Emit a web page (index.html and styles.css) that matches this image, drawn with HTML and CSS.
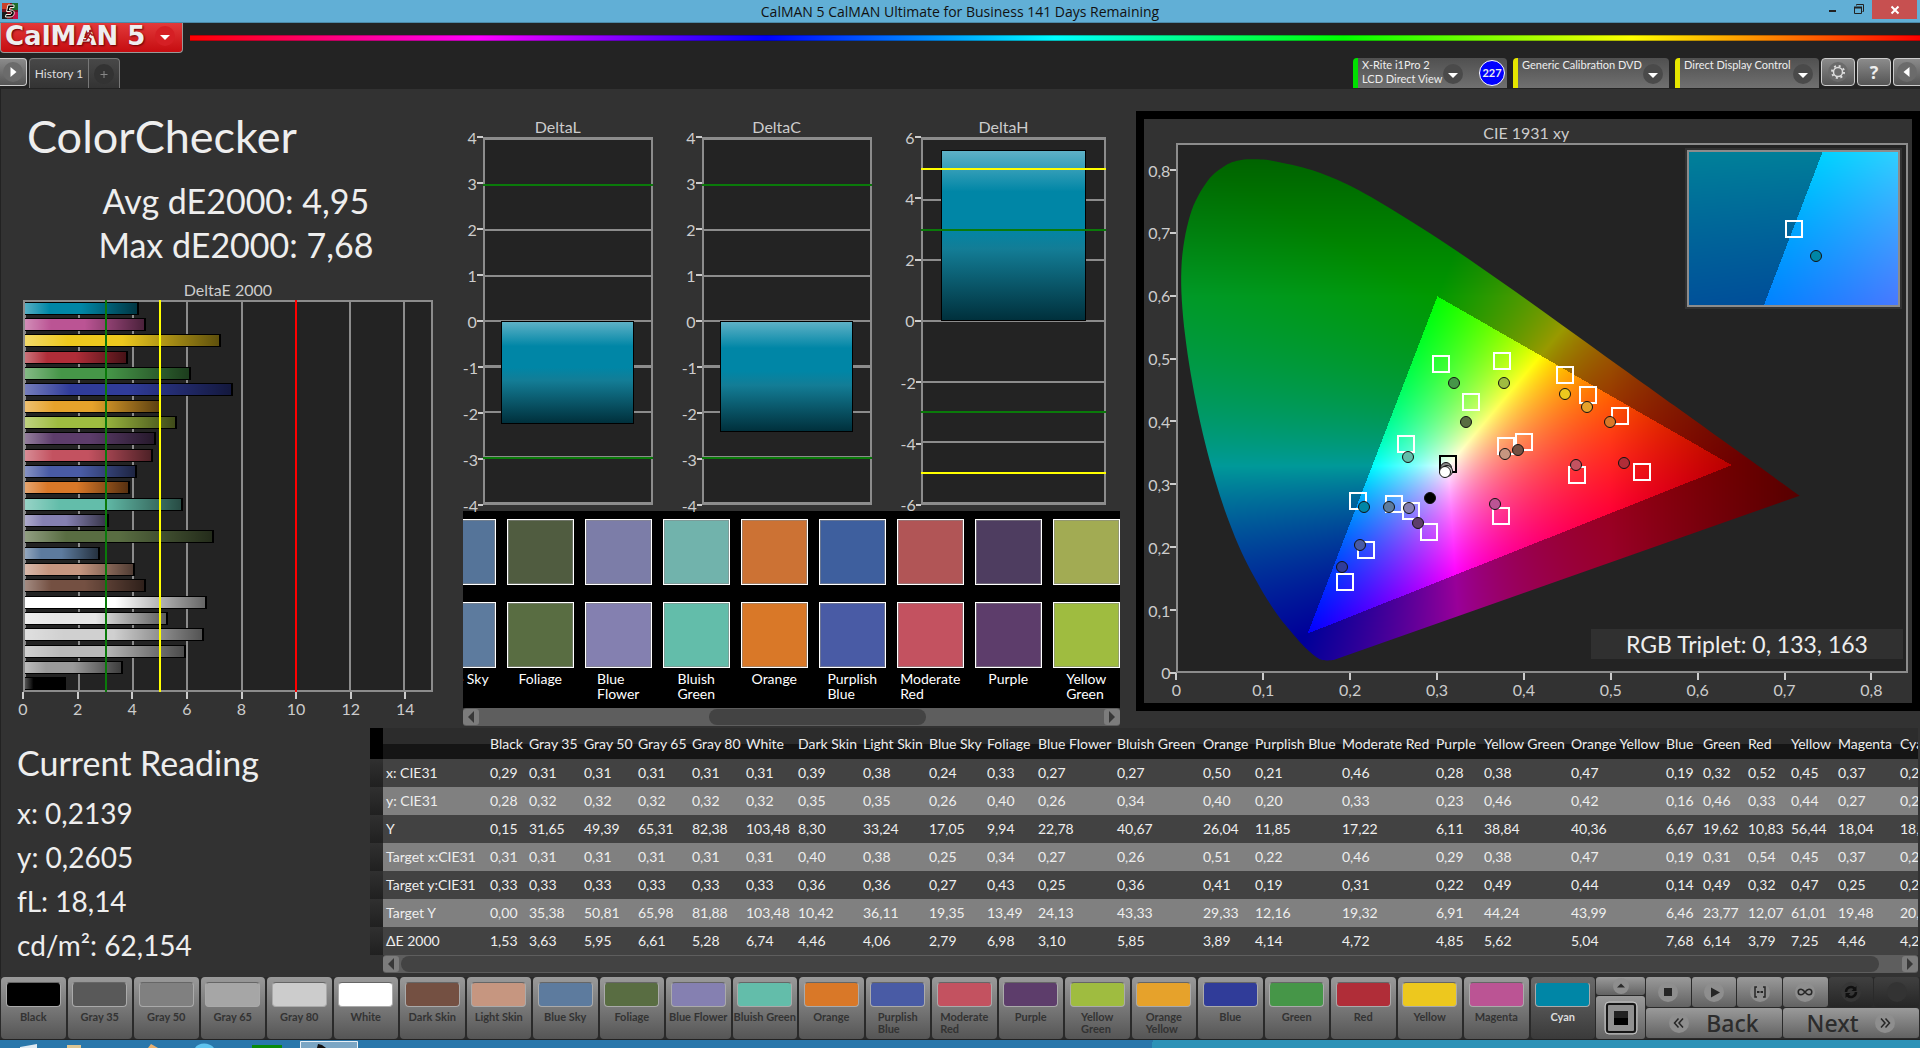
FILE: index.html
```html
<!DOCTYPE html>
<html lang="en">
<head>
<meta charset="utf-8">
<title>CalMAN 5 CalMAN Ultimate for Business 141 Days Remaining</title>
<link rel="stylesheet" href="styles.css">
</head>
<body>
<header class="titlebar">
  <svg class="app-icon" viewBox="0 0 16 16" aria-hidden="true"><rect width="16" height="16" fill="#7a1420"/><rect width="8" height="6" fill="#c8402a"/><rect x="10" width="6" height="7" fill="#1d6b2c"/><rect y="9" width="5" height="7" fill="#1a1a1a"/><rect x="11" y="9" width="5" height="7" fill="#c01048"/><path d="M12 2H6L4.500 8.500h4c2 0 1.500 3-.5 3H4L3.500 14H8c5 0 6-7 1-7H7.500L8 4.500h4z" fill="#000" stroke="#f2efe4" stroke-width="1"/></svg>
  <span class="window-title">CalMAN 5 CalMAN Ultimate for Business 141 Days Remaining</span>
  <div class="window-buttons">
    <button aria-label="Minimize"><svg viewBox="0 0 12 12"><path d="M2 7h7v2H2z" fill="#222"/></svg></button>
    <button aria-label="Restore"><svg viewBox="0 0 12 12" fill="none" stroke="#222"><path d="M1.500 4.500h7v6h-7zM3.500 2.500v-1h7v7h-1"/><path d="M1 4.500h8" stroke-width="2"/></svg></button>
    <button class="close" aria-label="Close"><svg viewBox="0 0 12 12"><path d="M2.500 2.500l7 7m0-7l-7 7" stroke="#fff" stroke-width="2"/></svg></button>
  </div>
</header>

<div class="toolbar">
  <div class="brand-row">
    <button class="brand"><span>CalMAN 5</span>
      <svg viewBox="0 0 20 20" aria-hidden="true"><circle cx="10" cy="10" r="10" fill="#d51f24"/><path d="M5 9h10l-5 5z" fill="#fff"/></svg>
      <svg class="runner" viewBox="0 0 12 14" aria-hidden="true"><circle cx="7.500" cy="2" r="1.600" fill="#a3151a"/><path d="M7 4L5 8l3 2-1 3M5 8L3 11H0M2 6l3-2h2l2 2h2" fill="none" stroke="#a3151a" stroke-width="1.500"/></svg>
    </button>
    <div class="spectrum"></div>
  </div>
  <div class="tab-row">
    <button class="square left-edge" aria-label="Expand left panel"><svg viewBox="0 0 20 20"><circle class="knob" cx="10" cy="10" r="10"/><path d="M7.500 5l6 5-6 5z" fill="#fff"/></svg></button>
    <nav class="tabs"><a href="#history" class="tab">History 1</a><button class="tab add" aria-label="Add tab"><svg viewBox="0 0 20 20"><circle cx="10" cy="10" r="10" fill="#333"/><path d="M10 7v7M6.500 10.500h7" stroke="#888"/></svg></button></nav>
    <div class="devices">
      <button class="device meter"><span>X-Rite i1Pro 2<br>LCD Direct View</span><svg viewBox="0 0 20 20" aria-hidden="true"><circle class="dark-knob" cx="10" cy="10" r="10"/><path d="M5 9h10l-5 5z" fill="#fff"/></svg><b class="count">227</b></button>
      <button class="device source"><span>Generic Calibration DVD</span><svg viewBox="0 0 20 20" aria-hidden="true"><circle class="dark-knob" cx="10" cy="10" r="10"/><path d="M5 9h10l-5 5z" fill="#fff"/></svg></button>
      <button class="device display"><span>Direct Display Control</span><svg viewBox="0 0 20 20" aria-hidden="true"><circle class="dark-knob" cx="10" cy="10" r="10"/><path d="M5 9h10l-5 5z" fill="#fff"/></svg></button>
      <button class="square" aria-label="Settings"><svg viewBox="0 0 20 20"><circle class="knob" cx="10" cy="10" r="10"/><circle cx="10" cy="10" r="4.500" fill="none" stroke="#ddd" stroke-width="1.500"/><circle cx="10" cy="10" r="6" fill="none" stroke="#ddd" stroke-width="2" stroke-dasharray="2 2.710"/></svg></button>
      <button class="square help" aria-label="Help">?</button>
      <button class="square right-edge" aria-label="Expand right panel"><svg viewBox="0 0 20 20"><circle class="knob" cx="10" cy="10" r="10"/><path d="M12.500 5l-6 5 6 5z" fill="#fff"/></svg></button>
    </div>
  </div>
</div>

<main class="workspace">
  <div class="upper">
    <section class="summary">
      <h1>ColorChecker</h1>
      <p class="stats">Avg dE2000: 4,95<br>Max dE2000: 7,68</p>
      <h2 class="chart-title">DeltaE 2000</h2>
      <div class="plot de-plot">
        <ol class="bars">
          <li style="--v:4.23;--c:#0086a6"></li><li style="--v:4.46;--c:#bb5494"></li><li style="--v:7.25;--c:#edc81e"></li><li style="--v:3.79;--c:#b02d38"></li><li style="--v:6.14;--c:#469648"></li><li style="--v:7.68;--c:#303c99"></li><li style="--v:5.04;--c:#e6a22b"></li><li style="--v:5.62;--c:#9fbc40"></li><li style="--v:4.85;--c:#5d3d6b"></li><li style="--v:4.72;--c:#c35260"></li><li style="--v:4.14;--c:#495ba5"></li><li style="--v:3.89;--c:#d97828"></li><li style="--v:5.85;--c:#63bdaa"></li><li style="--v:3.10;--c:#8580b1"></li><li style="--v:6.98;--c:#596d42"></li><li style="--v:2.79;--c:#5d7b9e"></li><li style="--v:4.06;--c:#c69680"></li><li style="--v:4.46;--c:#745042"></li><li style="--v:6.74;--c:#fff"></li><li style="--v:5.28;--c:#e6e6e6"></li><li style="--v:6.61;--c:#d0d0d0"></li><li style="--v:5.95;--c:#b9b9b9"></li><li style="--v:3.63;--c:#9a9a9a"></li><li style="--v:1.53;--c:#000"></li>
        </ol>
        <i class="limit green" style="--v:3"></i><i class="limit yellow" style="--v:5"></i><i class="limit red" style="--v:10"></i>
      </div>
      <ol class="x-axis de-axis"><li>0</li><li>2</li><li>4</li><li>6</li><li>8</li><li>10</li><li>12</li><li>14</li></ol>
    </section>

    <section class="middle">
      <div class="deltas">
        <figure class="delta four">
          <figcaption class="chart-title">DeltaL</figcaption>
          <ol class="y-axis"><li>4</li><li>3</li><li>2</li><li>1</li><li>0</li><li>-1</li><li>-2</li><li>-3</li><li>-4</li></ol>
          <div class="plot"><i class="column" style="--from:0;--to:-2.27"></i><i class="level green" style="--v:3"></i><i class="level green" style="--v:-3"></i></div>
        </figure>
        <figure class="delta four">
          <figcaption class="chart-title">DeltaC</figcaption>
          <ol class="y-axis"><li>4</li><li>3</li><li>2</li><li>1</li><li>0</li><li>-1</li><li>-2</li><li>-3</li><li>-4</li></ol>
          <div class="plot"><i class="column" style="--from:0;--to:-2.44"></i><i class="level green" style="--v:3"></i><i class="level green" style="--v:-3"></i></div>
        </figure>
        <figure class="delta six">
          <figcaption class="chart-title">DeltaH</figcaption>
          <ol class="y-axis"><li>6</li><li>4</li><li>2</li><li>0</li><li>-2</li><li>-4</li><li>-6</li></ol>
          <div class="plot"><i class="column" style="--from:5.63;--to:0"></i><i class="level yellow" style="--v:5"></i><i class="level green" style="--v:3"></i><i class="level green" style="--v:-3"></i><i class="level yellow" style="--v:-5"></i></div>
        </figure>
      </div>
      <div class="comparison">
        <ul class="pairs">
          <li><i style="--c:#557499"></i><i style="--c:#5d7b9e"></i><span>Blue Sky</span></li>
          <li><i style="--c:#505c40"></i><i style="--c:#596d42"></i><span>Foliage</span></li>
          <li><i style="--c:#7c7da8"></i><i style="--c:#8480b0"></i><span>Blue<br>Flower</span></li>
          <li><i style="--c:#71b3ac"></i><i style="--c:#63bdaa"></i><span>Bluish<br>Green</span></li>
          <li><i style="--c:#cc7234"></i><i style="--c:#d97828"></i><span>Orange</span></li>
          <li><i style="--c:#3e5f9e"></i><i style="--c:#495ba5"></i><span>Purplish<br>Blue</span></li>
          <li><i style="--c:#b15556"></i><i style="--c:#c35260"></i><span>Moderate<br>Red</span></li>
          <li><i style="--c:#4e3d60"></i><i style="--c:#5d3d6b"></i><span>Purple</span></li>
          <li><i style="--c:#a2ab53"></i><i style="--c:#9fbc40"></i><span>Yellow<br>Green</span></li>
        </ul>
      </div>
      <div class="scroll pairs-scroll"><button aria-label="Scroll left"><svg viewBox="0 0 16 16"><path d="M11 2v12L5 8z"/></svg></button><i></i><button aria-label="Scroll right"><svg viewBox="0 0 16 16"><path d="M5 2v12l6-6z"/></svg></button></div>
    </section>

    <section class="cie">
      <h2 class="chart-title">CIE 1931 xy</h2>
      <ol class="y-axis"><li>0,8</li><li>0,7</li><li>0,6</li><li>0,5</li><li>0,4</li><li>0,3</li><li>0,2</li><li>0,1</li><li>0</li></ol>
      <div class="plot">
        <canvas id="gamut" data-x0="0" data-x1="0.842" data-y0="0" data-y1="0.843"></canvas>
        <i class="target" style="--x:.304;--y:.492"></i><i class="target" style="--x:.3745;--y:.497"></i><i class="target" style="--x:.447;--y:.475"></i><i class="target" style="--x:.474;--y:.442"></i><i class="target" style="--x:.5115;--y:.409"></i><i class="target" style="--x:.339;--y:.4306"></i><i class="target" style="--x:.263;--y:.364"></i><i class="target" style="--x:.379;--y:.36"></i><i class="target" style="--x:.4;--y:.367"></i><i class="target black" style="--x:.312;--y:.331"></i><i class="target" style="--x:.4616;--y:.3147"></i><i class="target" style="--x:.537;--y:.3195"></i><i class="target" style="--x:.2073;--y:.2717"></i><i class="target" style="--x:.249;--y:.267"></i><i class="target" style="--x:.269;--y:.256"></i><i class="target" style="--x:.29;--y:.222"></i><i class="target" style="--x:.373;--y:.2477"></i><i class="target" style="--x:.2166;--y:.1935"></i><i class="target" style="--x:.193;--y:.1425"></i>
        <i class="dot" style="--x:.3187;--y:.4615;--c:#469648"></i><i class="dot" style="--x:.377;--y:.4615;--c:#9fbc40"></i><i class="dot" style="--x:.447;--y:.444;--c:#edc81e"></i><i class="dot" style="--x:.4726;--y:.423;--c:#e6a22b"></i><i class="dot" style="--x:.5;--y:.3993;--c:#d97828"></i><i class="dot" style="--x:.333;--y:.3993;--c:#596d42"></i><i class="dot" style="--x:.2653;--y:.3434;--c:#63bdaa"></i><i class="dot" style="--x:.3785;--y:.3477;--c:#c69680"></i><i class="dot" style="--x:.393;--y:.3546;--c:#745042"></i><i class="dot" style="--x:.31;--y:.325;--c:#888"></i><i class="dot" style="--x:.311;--y:.321;--c:#ccc"></i><i class="dot" style="--x:.3083;--y:.3195;--c:#fff"></i><i class="dot" style="--x:.4598;--y:.3307;--c:#c35260"></i><i class="dot" style="--x:.5156;--y:.3339;--c:#b02d38"></i><i class="dot" style="--x:.2142;--y:.2621;--c:#0086a6"></i><i class="dot" style="--x:.2433;--y:.2621;--c:#5d7b9e"></i><i class="dot" style="--x:.267;--y:.2605;--c:#8580b1"></i><i class="dot" style="--x:.2915;--y:.2765;--c:#000"></i><i class="dot" style="--x:.2775;--y:.2366;--c:#5d3d6b"></i><i class="dot" style="--x:.3663;--y:.2669;--c:#bb5494"></i><i class="dot" style="--x:.2107;--y:.2015;--c:#495ba5"></i><i class="dot" style="--x:.1893;--y:.1659;--c:#303c99"></i>
        <div class="inset"><canvas id="detail" data-x0="0.1784" data-x1="0.2394" data-y0="0.2412" data-y1="0.3028"></canvas><i class="inset-target"></i><i class="inset-dot"></i></div>
        <p class="triplet">RGB Triplet: 0, 133, 163</p>
      </div>
      <ol class="x-axis"><li>0</li><li>0,1</li><li>0,2</li><li>0,3</li><li>0,4</li><li>0,5</li><li>0,6</li><li>0,7</li><li>0,8</li></ol>
    </section>
  </div>

  <div class="lower">
    <section class="reading">
      <h2>Current Reading</h2>
      <p>x: 0,2139</p><p>y: 0,2605</p><p>fL: 18,14</p><p>cd/m²: 62,154</p>
    </section>
    <section class="data">
      <div class="table-view">
      <table>
        <colgroup><col style="width:13px"><col style="width:104px"><col style="width:39px"><col style="width:55px"><col style="width:54px"><col style="width:54px"><col style="width:54px"><col style="width:52px"><col style="width:65px"><col style="width:66px"><col style="width:58px"><col style="width:51px"><col style="width:79px"><col style="width:86px"><col style="width:52px"><col style="width:87px"><col style="width:94px"><col style="width:48px"><col style="width:87px"><col style="width:95px"><col style="width:37px"><col style="width:45px"><col style="width:43px"><col style="width:47px"><col style="width:62px"><col style="width:40px"></colgroup>
        <thead><tr><td></td><td></td><th>Black</th><th>Gray 35</th><th>Gray 50</th><th>Gray 65</th><th>Gray 80</th><th>White</th><th>Dark Skin</th><th>Light Skin</th><th>Blue Sky</th><th>Foliage</th><th>Blue Flower</th><th>Bluish Green</th><th>Orange</th><th>Purplish Blue</th><th>Moderate Red</th><th>Purple</th><th>Yellow Green</th><th>Orange Yellow</th><th>Blue</th><th>Green</th><th>Red</th><th>Yellow</th><th>Magenta</th><th>Cyan</th></tr></thead>
        <tbody>
        <tr><td></td><th>x: CIE31</th><td>0,29</td><td>0,31</td><td>0,31</td><td>0,31</td><td>0,31</td><td>0,31</td><td>0,39</td><td>0,38</td><td>0,24</td><td>0,33</td><td>0,27</td><td>0,27</td><td>0,50</td><td>0,21</td><td>0,46</td><td>0,28</td><td>0,38</td><td>0,47</td><td>0,19</td><td>0,32</td><td>0,52</td><td>0,45</td><td>0,37</td><td>0,21</td></tr>
        <tr><td></td><th>y: CIE31</th><td>0,28</td><td>0,32</td><td>0,32</td><td>0,32</td><td>0,32</td><td>0,32</td><td>0,35</td><td>0,35</td><td>0,26</td><td>0,40</td><td>0,26</td><td>0,34</td><td>0,40</td><td>0,20</td><td>0,33</td><td>0,23</td><td>0,46</td><td>0,42</td><td>0,16</td><td>0,46</td><td>0,33</td><td>0,44</td><td>0,27</td><td>0,26</td></tr>
        <tr><td></td><th>Y</th><td>0,15</td><td>31,65</td><td>49,39</td><td>65,31</td><td>82,38</td><td>103,48</td><td>8,30</td><td>33,24</td><td>17,05</td><td>9,94</td><td>22,78</td><td>40,67</td><td>26,04</td><td>11,85</td><td>17,22</td><td>6,11</td><td>38,84</td><td>40,36</td><td>6,67</td><td>19,62</td><td>10,83</td><td>56,44</td><td>18,04</td><td>18,14</td></tr>
        <tr><td></td><th>Target x:CIE31</th><td>0,31</td><td>0,31</td><td>0,31</td><td>0,31</td><td>0,31</td><td>0,31</td><td>0,40</td><td>0,38</td><td>0,25</td><td>0,34</td><td>0,27</td><td>0,26</td><td>0,51</td><td>0,22</td><td>0,46</td><td>0,29</td><td>0,38</td><td>0,47</td><td>0,19</td><td>0,31</td><td>0,54</td><td>0,45</td><td>0,37</td><td>0,21</td></tr>
        <tr><td></td><th>Target y:CIE31</th><td>0,33</td><td>0,33</td><td>0,33</td><td>0,33</td><td>0,33</td><td>0,33</td><td>0,36</td><td>0,36</td><td>0,27</td><td>0,43</td><td>0,25</td><td>0,36</td><td>0,41</td><td>0,19</td><td>0,31</td><td>0,22</td><td>0,49</td><td>0,44</td><td>0,14</td><td>0,49</td><td>0,32</td><td>0,47</td><td>0,25</td><td>0,27</td></tr>
        <tr><td></td><th>Target Y</th><td>0,00</td><td>35,38</td><td>50,81</td><td>65,98</td><td>81,88</td><td>103,48</td><td>10,42</td><td>36,11</td><td>19,35</td><td>13,49</td><td>24,13</td><td>43,33</td><td>29,33</td><td>12,16</td><td>19,32</td><td>6,91</td><td>44,24</td><td>43,99</td><td>6,46</td><td>23,77</td><td>12,07</td><td>61,01</td><td>19,48</td><td>20,16</td></tr>
        <tr><td></td><th>ΔE 2000</th><td>1,53</td><td>3,63</td><td>5,95</td><td>6,61</td><td>5,28</td><td>6,74</td><td>4,46</td><td>4,06</td><td>2,79</td><td>6,98</td><td>3,10</td><td>5,85</td><td>3,89</td><td>4,14</td><td>4,72</td><td>4,85</td><td>5,62</td><td>5,04</td><td>7,68</td><td>6,14</td><td>3,79</td><td>7,25</td><td>4,46</td><td>4,23</td></tr>
        </tbody>
      </table>
      </div>
      <div class="scroll table-scroll"><button aria-label="Scroll left"><svg viewBox="0 0 16 16"><path d="M11 2v12L5 8z"/></svg></button><i></i><button aria-label="Scroll right"><svg viewBox="0 0 16 16"><path d="M5 2v12l6-6z"/></svg></button></div>
    </section>
  </div>
</main>

<footer class="controls">
  <div class="palette">
    <button><i style="--c:#000"></i><span>Black</span></button>
    <button><i style="--c:#595959"></i><span>Gray 35</span></button>
    <button><i style="--c:#808080"></i><span>Gray 50</span></button>
    <button><i style="--c:#a6a6a6"></i><span>Gray 65</span></button>
    <button><i style="--c:#ccc"></i><span>Gray 80</span></button>
    <button><i style="--c:#fff"></i><span>White</span></button>
    <button><i style="--c:#745042"></i><span>Dark Skin</span></button>
    <button><i style="--c:#c69680"></i><span>Light Skin</span></button>
    <button><i style="--c:#5d7b9e"></i><span>Blue Sky</span></button>
    <button><i style="--c:#596d42"></i><span>Foliage</span></button>
    <button><i style="--c:#8580b1"></i><span>Blue Flower</span></button>
    <button><i style="--c:#63bdaa"></i><span>Bluish Green</span></button>
    <button><i style="--c:#d97828"></i><span>Orange</span></button>
    <button><i style="--c:#495ba5"></i><span>Purplish<br>Blue</span></button>
    <button><i style="--c:#c35260"></i><span>Moderate<br>Red</span></button>
    <button><i style="--c:#5d3d6b"></i><span>Purple</span></button>
    <button><i style="--c:#9fbc40"></i><span>Yellow<br>Green</span></button>
    <button><i style="--c:#e6a22b"></i><span>Orange<br>Yellow</span></button>
    <button><i style="--c:#303c99"></i><span>Blue</span></button>
    <button><i style="--c:#469648"></i><span>Green</span></button>
    <button><i style="--c:#b02d38"></i><span>Red</span></button>
    <button><i style="--c:#edc81e"></i><span>Yellow</span></button>
    <button><i style="--c:#bb5494"></i><span>Magenta</span></button>
    <button class="selected"><i style="--c:#0086a6"></i><span>Cyan</span></button>
  </div>
  <div class="pattern">
    <button aria-label="Show pattern list"><svg viewBox="0 0 20 20" width="16" height="16"><circle class="pale-knob" cx="10" cy="10" r="10"/><path d="M5 12h10l-5-5z" fill="#2a2a2a"/></svg></button>
    <button aria-label="Pattern window"><svg viewBox="0 0 34 34" width="34" height="34"><rect x="1" y="1" width="32" height="32" rx="4" fill="#8c8c8c" stroke="#c4c4c4"/><rect x="3" y="3" width="28" height="28" rx="2" fill="#909090" stroke="#161616" stroke-width="2"/><path d="M10 10h14v14H10z" fill="#000"/><path d="M10 10h14v7H10z" fill="#222"/></svg></button>
  </div>
  <div class="transport">
    <button aria-label="Stop"><svg viewBox="0 0 20 20"><circle class="pale-knob" cx="10" cy="10" r="10"/><path d="M6 6h8v8H6z"/></svg></button>
    <button aria-label="Read"><svg viewBox="0 0 20 20"><circle class="pale-knob" cx="10" cy="10" r="10"/><path d="M7 5.500l9 5-9 5z"/></svg></button>
    <button aria-label="Read series"><svg viewBox="0 0 20 20"><circle class="pale-knob" cx="10" cy="10" r="10"/><path d="M7 5H5v10h2M13 5h2v10h-2" fill="none" stroke="#262626" stroke-width="1.500"/><path d="M7 9h2v2H7zM9.500 9h1v2h-1zM11 9h2v2h-2z"/></svg></button>
    <button aria-label="Read continuous"><svg viewBox="0 0 20 20"><circle class="pale-knob" cx="10" cy="10" r="10"/><path d="M10 10C8 7.500 7 7.200 6 7.200a2.800 2.800 0 0 0 0 5.600c1 0 2-.3 4-2.800s3-2.800 4-2.800a2.800 2.800 0 0 1 0 5.600c-1 0-2-.3-4-2.800z" fill="none" stroke="#262626" stroke-width="1.500"/></svg></button>
    <button class="off" aria-label="Repeat"><svg viewBox="0 0 20 20"><circle cx="10" cy="10" r="10" fill="#363636"/><path d="M5 10a5 5 0 0 1 8.500-3.500M15 10a5 5 0 0 1-8.500 3.500" fill="none" stroke="#101010" stroke-width="2.500"/><path d="M15.500 4v5h-5zM4.500 16v-5h5z" fill="#101010"/></svg></button>
    <button class="off" aria-label="Idle"><svg viewBox="0 0 20 20"><circle cx="10" cy="10" r="10" fill="#333"/></svg></button>
    <button class="wide"><svg viewBox="0 0 20 20" aria-hidden="true"><circle class="pale-knob" cx="10" cy="10" r="10"/><path d="M9.500 5.500L5.500 10l4 4.500M14 5.500L10 10l4 4.500" fill="none" stroke="#262626" stroke-width="1.500"/></svg>Back</button>
    <button class="wide next">Next<svg viewBox="0 0 20 20" aria-hidden="true"><circle class="pale-knob" cx="10" cy="10" r="10"/><path d="M6 5.500L10 10l-4 4.500M10.500 5.500L14.500 10l-4 4.500" fill="none" stroke="#262626" stroke-width="1.500"/></svg></button>
  </div>
</footer>
<div class="taskbar">
  <svg viewBox="0 0 370 8" width="370" height="8" aria-hidden="true"><path d="M20 7l17-3v4H20z" fill="#dfeaf2"/><path d="M67 5h14v3H67z" fill="#dcc592"/><path d="M148 8l3-4 7 4z" fill="#e8b070"/><path d="M195 8c3-6 15-6 19 0z" fill="#5fc3ee"/><path d="M252 5h30v3h-30z" fill="#0a8a0a"/><path d="M300.500 8V1.500h57V8" fill="#7ba6c4" stroke="#e8f0f6"/><path d="M317 8l1-4 4 1 4 3z" fill="#111"/></svg>
</div>
<script src="gamut.js"></script>
</body>
</html>
```
FILE: styles.css
```css
* { box-sizing: border-box; }
body { margin: 0; min-height: 100vh; display: flex; flex-direction: column; background: #232323; color: #eee; font-family: Lato, "Open Sans", sans-serif; overflow-x: hidden; }
button { margin: 0; padding: 0; border: 0; background: none; color: inherit; font: inherit; cursor: pointer; }
ol, ul { list-style: none; margin: 0; padding: 0; }
h1, h2, p, figure { margin: 0; font-weight: 400; }
svg { display: block; flex: none; }

.titlebar { display: grid; grid-template-columns: 1fr auto 1fr; height: 23px; background: #61afd6; color: #111; border-bottom: 1px solid #4c8aa9; }
.app-icon { width: 16px; height: 16px; margin: 3px 2px; }
.window-title { font: 14px/23px "Open Sans", sans-serif; }
.window-buttons { display: flex; justify-content: flex-end; align-items: flex-start; padding-right: 3px; }
.window-buttons button { width: 26px; height: 18px; display: grid; place-items: center; }
.window-buttons svg { width: 12px; height: 12px; }
.window-buttons .close { width: 45px; height: 19px; background: #c75050; }

.toolbar { height: 66px; display: flex; flex-direction: column; justify-content: space-between; }
.brand-row { display: flex; gap: 7px; }
.brand { position: relative; width: 183px; height: 30px; padding: 0 7px 4px 4px; display: flex; align-items: center; justify-content: space-between; background: linear-gradient(#e23a3a, #c60c10); border: 1px solid #999; border-top: 0; border-radius: 0 0 4px 4px; font: bold 26px/26px "DejaVu Sans", sans-serif; color: #eee; text-shadow: 1px 1px 2px #600; }
.brand > svg { width: 20px; height: 20px; }
.brand .runner { position: absolute; width: 12px; height: 14px; left: 82px; top: 6px; }
.spectrum { flex: 1; height: 6px; margin-top: 12px; border: 1px solid #0004; border-width: 1px 0; background: linear-gradient(90deg, red, #f0f, #00f, #0ff, #0f0, #ff0, red); }
.tab-row { display: flex; height: 31px; }
.knob { fill: #6b6b6b; }
.dark-knob { fill: #4a4a4a; }
.pale-knob { fill: #8e8e8e; }
.square { width: 34px; height: 28px; display: grid; place-items: center; background: linear-gradient(#8b8b8b, #555); border: 1px solid #ccc; border-radius: 4px; }
.square svg { width: 20px; height: 20px; }
.left-edge { width: 27px; border-left: 0; border-radius: 0 4px 4px 0; }
.right-edge { width: 27px; border-right: 0; border-radius: 4px 0 0 4px; }
.help { font: bold 18px/24px "Open Sans", sans-serif; }
.tabs { display: flex; height: 30px; margin-left: 2px; background: linear-gradient(#484848, #333); border: 1px solid #777; border-bottom: 0; border-radius: 4px 4px 0 0; }
.tab { display: grid; place-items: center; width: 59px; font-size: 12px; color: #ddd; text-decoration: none; border-right: 1px solid #777; }
.tab.add { width: 30px; border: 0; }
.tab svg { width: 20px; height: 20px; }
.devices { margin-left: auto; display: flex; gap: 2px; }
.device { display: flex; align-items: flex-start; height: 30px; background: linear-gradient(#505050, #707070); border-left: 5px solid #e6e600; border-radius: 4px 4px 0 0; padding: 0 6px 0 4px; font-size: 11px; line-height: 14px; text-align: left; white-space: nowrap; }
.device svg { width: 20px; height: 20px; margin: 6px 0 0 auto; }
.meter { width: 154px; border-left-color: #00e000; margin-right: 4px; padding-right: 2px; }
.source { width: 156px; margin-right: 4px; }
.display { width: 144px; }
.meter svg { margin-right: 8px; }
.count { width: 26px; height: 26px; margin: 2px 0 0 8px; display: grid; place-items: center; border: 1px solid #fff; border-radius: 50%; background: #00f; }

.workspace { flex: 1; background: #323232; border-left: 1px solid #222; }
.upper { display: grid; grid-template-columns: minmax(0, 450fr) minmax(0, 686fr) minmax(0, 784fr); }
.chart-title { font-size: 16px; line-height: 20px; text-align: center; color: #ccc; }
.plot { position: relative; background: #232323; border: 2px solid #8c8c8c; }
.x-axis, .y-axis { display: flex; justify-content: space-between; font-size: 16px; color: #ccc; }
.x-axis li { width: 0; display: flex; flex-direction: column; align-items: center; line-height: 20px; }
.x-axis li::before { content: ""; width: 2px; height: 7px; flex: none; background: #ccc; }
.y-axis { flex-direction: column; }
.y-axis li { height: 0; display: flex; align-items: center; justify-content: flex-end; }
.y-axis li::after { content: ""; width: 6px; height: 2px; background: #ccc; }
.green { background: #0a7a0a; }
.yellow { background: #ff0; }
.red { background: red; }

.summary { padding: 22px 18px 0 22px; }
.summary h1 { padding-left: 4px; font-size: 45px; line-height: 50px; }
.stats { padding: 0 0 0 16px; margin: 18px 0 13px; font-size: 34px; line-height: 44px; text-align: center; }
.de-plot { height: 392px; background: repeating-linear-gradient(90deg, #8c8c8c 0 1px, #232323 1px calc(100% * 2 / 15 - 1px), #8c8c8c calc(100% * 2 / 15 - 1px) calc(100% * 2 / 15)); }
.bars { height: calc(100% + 4px); margin: -2px 0; display: flex; flex-direction: column; justify-content: space-around; }
.bars li { width: calc(var(--v) / 15 * 100%); height: 13px; border: 1px solid #000; border-width: 1px 2px 1px 0; background: linear-gradient(90deg, #fff5, #fff0 22%, #0000 50%, #0009) var(--c); }
.limit { position: absolute; top: -2px; bottom: -2px; width: 2px; left: calc(var(--v) / 15 * 100% - 1px); }
.de-axis { width: 93.333%; }

.middle { padding: 28px 16px 0 12px; }
.deltas { display: grid; grid-template-columns: 190fr 190fr 206fr; gap: 29px; padding-right: 14px; }
.delta { display: grid; grid-template-columns: 20px 1fr; grid-template-rows: 20px 368px; }
.delta .chart-title { grid-column: 1 / 3; }
.four { --range: 8; --max: 4; --step: 12.5%; }
.six { --range: 12; --max: 6; --step: 16.667%; }
.delta .plot { background: repeating-linear-gradient(#8c8c8c 0 1px, #232323 1px calc(var(--step) - 1px), #8c8c8c calc(var(--step) - 1px) var(--step)); }
.column { position: absolute; left: 10%; right: 10%; top: calc((var(--max) - var(--from)) / var(--range) * 100%); height: calc((var(--from) - var(--to)) / var(--range) * 100%); border: 1px solid #000; background: linear-gradient(#5eb1c6, #0086a6 24%, #0086a6 45%, #137d96 58%, #00303c); }
.level { position: absolute; left: -2px; right: -2px; height: 2px; top: calc((var(--max) - var(--v)) / var(--range) * 100% - 1px); }
.comparison { margin-top: 6px; height: 197px; padding-top: 8px; background: #000; overflow: hidden; }
.pairs { display: flex; gap: 11px; margin-left: -34px; }
.pairs li { flex: none; width: 67px; display: flex; flex-direction: column; align-items: center; }
.pairs i { width: 67px; height: 66px; margin-bottom: 17px; border: 1px solid #fff; background: var(--c); box-shadow: inset 0 0 0 1px #8888; }
.pairs i + i { margin-bottom: 3px; }
.pairs span { font-size: 14px; line-height: 15px; color: #fff; }
.scroll { display: flex; align-items: center; height: 18px; background: #5e5e5e; border-radius: 3px; }
.scroll button { width: 16px; height: 16px; background: #7c7c7c; border-radius: 3px; }
.scroll path { fill: #383838; }
.scroll i { height: 16px; background: #434343; border-radius: 8px; }
.pairs-scroll i { width: 33%; margin: 0 auto 0 35%; }
.table-scroll { margin-left: 13px; }
.table-scroll i { flex: 1; margin: 0 23px 0 2px; }

.cie { margin-top: 22px; border: 8px solid #000; height: 600px; padding: 4px 4px 0 0; display: grid; grid-template-columns: 32px 1fr; grid-template-rows: 20px 530px 30px; }
.cie .chart-title { grid-column: 1 / 3; }
.cie .y-axis { height: 94.9%; align-self: end; }
.cie .x-axis { grid-column: 2; width: 95%; }
.cie canvas { display: block; width: 100%; height: 100%; }
.cie .plot { min-width: 0; }
.target, .dot { position: absolute; left: calc(var(--x) / .842 * 100%); top: calc(100% - var(--y) / .843 * 100%); transform: translate(-50%, -50%); }
.target, .inset-target { width: 18px; height: 18px; border: 2px solid #fff; }
.target.black { border-color: #000; }
.dot, .inset-dot { width: 12px; height: 12px; border: 1px solid #111; border-radius: 50%; background: var(--c); }
.inset { position: absolute; top: 5px; right: 6px; width: 213px; height: 157px; border: 2px solid #8c8c8c; outline: 2px solid #323232; }
.inset-target, .inset-dot { position: absolute; transform: translate(-50%, -50%); left: 50%; top: 50%; }
.inset-dot { left: 61%; top: 68%; --c: #0086a6; }
.triplet { position: absolute; right: 3px; bottom: 12px; width: 312px; height: 30px; background: #303030; font-size: 23px; line-height: 30px; text-align: center; }

.lower { display: grid; grid-template-columns: 369px minmax(0, 1fr); margin-top: 2px; padding-right: 2px; }
.reading { padding: 13px 0 0 16px; font-size: 28px; line-height: 44px; }
.reading h2 { font-size: 34px; line-height: 44px; margin-bottom: 6px; }
.table-view { overflow: hidden; }
table { width: 1567px; table-layout: fixed; border-collapse: collapse; font-size: 14px; line-height: 28px; color: #eee; }
th, td { height: 28px; padding: 0 0 0 3px; font-weight: 400; text-align: left; white-space: nowrap; }
thead tr { background: linear-gradient(#2c2c2c 50%, #151515 50%); }
thead th, thead td { height: 31px; }
thead td:first-child { background: #000; }
tbody tr { background: #424242; }
tbody tr:nth-child(even) { background: #808080; }
tbody td:first-child { background: linear-gradient(#303030, #202020); }

.controls { display: flex; height: 62px; gap: 1px; padding-right: 1px; background: #2a2a2a; }
.palette { flex: 1; display: grid; grid-template-columns: repeat(24, minmax(0, 1fr)); gap: 2px; padding-left: 1px; }
.palette button { display: flex; flex-direction: column; align-items: center; padding-top: 5px; background: linear-gradient(#9a9a9a, #555); border-radius: 4px; font-size: 11px; line-height: 12px; font-weight: 700; color: #333; text-align: left; white-space: nowrap; }
.palette i { width: 55px; height: 25px; margin-bottom: 4px; border: 1px solid #aaa; border-top-color: #666; border-radius: 4px; background: var(--c); }
.palette .selected { background: linear-gradient(#6a6a6a, #3a3a3a); color: #ddd; }
.pattern { width: 49px; display: grid; grid-template-rows: 18px 1fr; gap: 1px; }
.pattern button, .transport button { display: flex; align-items: center; justify-content: center; background: linear-gradient(#9a9a9a, #626262); border-radius: 3px; }
.transport { width: 273px; display: grid; grid-template-columns: repeat(6, 1fr); grid-template-rows: 30px 30px; gap: 1px; }
.transport svg { width: 20px; height: 20px; fill: #262626; }
.transport .off { background: linear-gradient(#404040, #262626); }
.transport .wide { grid-column: span 3; gap: 17px; font: 500 23px/28px "Noto Sans", sans-serif; color: #2c2c2c; }
.taskbar { height: 9px; border-top: 1px solid #222; background: linear-gradient(100deg, #2977ab 60%, #2d92b7 60%); overflow: hidden; }
```
FILE: gamut.js
```js
// Spectral locus outline in CIE 1931 xy coordinates.
const LOCUS = [[.18,.0175],[.172,.017],[.164,.019],[.156,.0265],[.144,.042],[.1241,.074],[.1096,.101],[.0913,.143],[.0687,.2057],[.0454,.295],[.0235,.4127],[.0082,.5384],[.0039,.6448],[.0139,.7302],[.034,.785],[.055,.81],[.07,.818],[.085,.82],[.11,.8175],[.1547,.8029],[.1929,.7816],[.2296,.7543],[.3016,.6923],[.3731,.6245],[.4441,.5547],[.5125,.4866],[.5752,.4242],[.627,.3725],[.6658,.334],[.6915,.3083],[.719,.2809]];

// Colour of a chromaticity: linear sRGB scaled to its largest channel, dimmed outside the gamut.
function colour(x, y) {
  const X = x / y, Z = (1 - x - y) / y;
  const rgb = [3.2406 * X - 1.5372 - .4986 * Z, -.9689 * X + 1.8758 + .0415 * Z, .0557 * X - .204 + 1.057 * Z];
  let level = Math.min(...rgb) < -.001 ? .6 : 1;
  if (x > .5) level *= 1 - (x - .5) * 2;
  if (y > .6) level *= 1 - (y - .6) * 1.6;
  const top = Math.max(...rgb);
  return rgb.map(v => Math.max(0, v) / top * 255 * level);
}

function paint(canvas) {
  const w = canvas.width = canvas.clientWidth, h = canvas.height = canvas.clientHeight;
  const { x0, x1, y0, y1 } = canvas.dataset;
  const layer = document.createElement('canvas');
  layer.width = w; layer.height = h;
  const lc = layer.getContext('2d'), img = lc.createImageData(w, h);
  for (let j = 0; j < h; j++) for (let i = 0; i < w; i++) {
    const c = colour(+x0 + (x1 - x0) * (i + .5) / w, +y1 - (y1 - y0) * (j + .5) / h);
    img.data.set([c[0], c[1], c[2], 255], (j * w + i) * 4);
  }
  lc.putImageData(img, 0, 0);

  // Smooth curve through the locus points (Catmull-Rom), closed by the straight purple line.
  const p = LOCUS.map(([x, y]) => [(x - x0) / (x1 - x0) * w, (y1 - y) / (y1 - y0) * h]);
  const ctx = canvas.getContext('2d');
  ctx.beginPath();
  ctx.moveTo(...p[0]);
  for (let i = 0; i < p.length - 1; i++) {
    const a = p[i - 1] || p[i], b = p[i], c = p[i + 1], d = p[i + 2] || c;
    ctx.bezierCurveTo(b[0] + (c[0] - a[0]) / 6, b[1] + (c[1] - a[1]) / 6, c[0] - (d[0] - b[0]) / 6, c[1] - (d[1] - b[1]) / 6, c[0], c[1]);
  }
  ctx.closePath();
  ctx.fillStyle = ctx.createPattern(layer, 'no-repeat');
  ctx.fill();
}

function paintAll() { document.querySelectorAll('canvas').forEach(paint); }
paintAll();
window.addEventListener('resize', paintAll);
```
